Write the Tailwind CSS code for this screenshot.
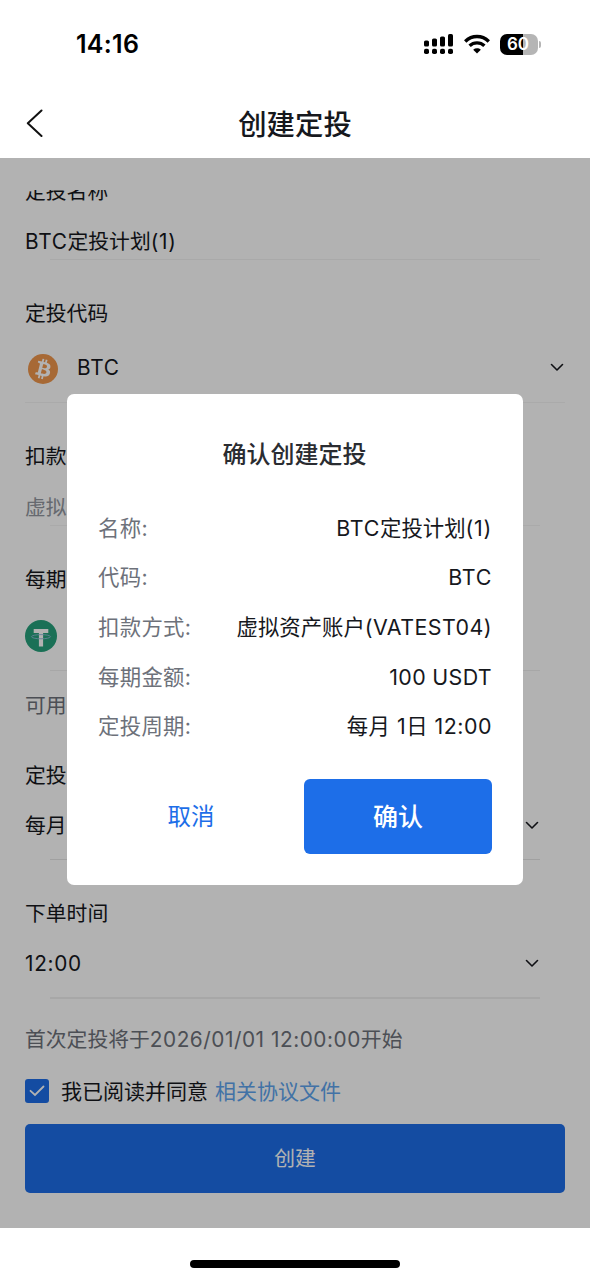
<!DOCTYPE html>
<html lang="zh-CN">
<head>
<meta charset="utf-8">
<meta name="viewport" content="width=590">
<title>创建定投</title>
<script src="https://cdn.jsdelivr.net/npm/@tailwindcss/browser@4"></script>
</head>
<body class="bg-white">
<div class="relative flex h-[1280px] w-[590px] flex-col overflow-hidden bg-white font-['Inter','Noto_Sans_CJK_SC',sans-serif] text-[20.8px] leading-[30px] text-[#16181d]">

  <!-- Status bar -->
  <header class="flex h-[88px] shrink-0 items-center justify-between pr-[49px] pl-[76px]">
    <span class="text-[25px] font-semibold tracking-[0.3px] text-black">14:16</span>
    <div class="flex items-center">
      <svg class="h-[22px] w-[32px]" viewBox="0 0 32 22" fill="#000">
        <rect x="1" y="7.500" width="5" height="6" rx="1.600"/><rect x="9" y="5.500" width="5" height="8" rx="1.600"/><rect x="17" y="3.500" width="5" height="10" rx="1.600"/><rect x="25" y="1" width="5" height="12.500" rx="1.600"/>
        <rect x="1" y="15.800" width="5" height="5.200" rx="1.800"/><rect x="9" y="15.800" width="5" height="5.200" rx="1.800"/><rect x="17" y="15.800" width="5" height="5.200" rx="1.800"/><rect x="25" y="15.800" width="5" height="5.200" rx="1.800"/>
      </svg>
      <svg class="ml-[9px] h-[20px] w-[26px]" viewBox="0 0 26 20" fill="none" stroke="#000" stroke-width="3.4">
        <path d="M1.200 7.400C8 .9 18 .9 24.800 7.400"/><path d="M5.600 11.800C9.800 7.900 16.200 7.900 20.400 11.800"/><path d="M13 19.500 9.200 15.700C11.400 13.900 14.600 13.900 16.800 15.700Z" fill="#000" stroke="none"/>
      </svg>
      <div class="ml-[10px] flex h-[21px] w-[38px] items-center justify-center rounded-[7px] bg-linear-to-r from-black from-60% to-[#b5b5b5] to-60% pr-[2px] text-[17px] font-semibold text-white">60</div>
      <div class="ml-[1px] h-[7px] w-[2px] rounded-r-full bg-[#b5b5b5]"></div>
    </div>
  </header>

  <!-- Title bar -->
  <nav class="grid h-[70px] shrink-0 grid-cols-[60px_1fr_60px] items-center">
    <svg class="ml-[26px] h-[28px] w-[17px]" viewBox="0 0 17 28" fill="none" stroke="#111" stroke-width="2" stroke-linecap="round" stroke-linejoin="round"><path d="M15.500 1.500 1.800 14.200 15.500 27"/></svg>
    <h1 class="pt-[3px] text-center text-[28.4px] font-medium">创建定投</h1>
  </nav>

  <!-- Form under the dimming mask -->
  <main class="relative h-[1070px] shrink-0 pt-[32px]">
    <div class="flex h-[1038px] flex-col overflow-hidden px-[25px]">
      <div class="-mt-[13px] h-[30px] shrink-0">定投名称</div>
      <div class="mt-[15px] flex h-[37px] shrink-0 items-center pt-[2px] whitespace-nowrap"><span class="tracking-[0.7px]">BTC</span>定投计划<span class="tracking-[0.7px]">(1)</span></div>
      <div class="mr-[25px] ml-[25px] h-px shrink-0 bg-[#f2f2f2]"></div>

      <div class="mt-[39px] h-[30px] shrink-0">定投代码</div>
      <div class="mt-[5px] flex h-[68px] shrink-0 items-center">
        <svg class="mt-[2px] ml-[3px] h-[30px] w-[30px]" viewBox="0 0 32 32"><circle cx="16" cy="16" r="16" fill="#ef974d"/><path fill="#fff" transform="translate(16 16) scale(1.1) translate(-16 -16)" d="M23.200 14c.3-2.100-1.300-3.200-3.500-4l.7-2.800-1.700-.4-.7 2.700-1.400-.3.7-2.800-1.700-.4-.7 2.800-1.100-.3-2.400-.6-.4 1.900 1.200.3c.7.2.8.6.8 1l-1.900 7.800c-.1.2-.3.5-.8.4l-1.200-.3-.9 2 3.500.9-.7 2.800 1.700.4.7-2.800 1.400.4-.7 2.800 1.700.4.7-2.900c3 .6 5.200.3 6.100-2.300.8-2.200 0-3.400-1.500-4.200 1.100-.3 1.900-1 2.100-2.500zm-3.900 5.500c-.5 2.200-4.200 1-5.400.7l1-3.900c1.200.3 5 .9 4.400 3.200zm.5-5.500c-.5 2-3.500 1-4.500.7l.9-3.500c1 .3 4.200.7 3.600 2.800z"/></svg>
        <span class="ml-[19px] tracking-[0.7px]">BTC</span>
        <svg class="mr-[1px] mb-[2px] ml-auto h-[9px] w-[14px]" viewBox="0 0 14 9" fill="none" stroke="#16181d" stroke-width="1.6" stroke-linecap="round" stroke-linejoin="round"><path d="M1.500 1.500 7 7 12.500 1.500"/></svg>
      </div>
      <div class="h-px shrink-0 bg-[#f4f4f4]"></div>

      <div class="mt-[39px] h-[30px] shrink-0">扣款</div>
      <div class="mt-[17px] flex h-[36px] shrink-0 items-center pt-[2px] text-[#9297a0]">虚拟</div>
      <div class="mr-[25px] ml-[25px] h-px shrink-0 bg-[#f4f4f4]"></div>

      <div class="mt-[39px] h-[30px] shrink-0">每期</div>
      <div class="mt-[7px] flex h-[68px] shrink-0 items-center">
        <svg class="h-[32px] w-[32px]" viewBox="0 0 32 32"><circle cx="16" cy="16" r="16" fill="#26a17b"/><path fill="#fff" d="M8.700 9h14.600v4h-5.200v13.500h-4.200V13H8.700z"/><ellipse cx="16" cy="16.700" rx="9.500" ry="2.100" fill="none" stroke="#8fb9d8" stroke-width=".9"/></svg>
      </div>
      <div class="mr-[25px] ml-[25px] h-px shrink-0 bg-[#f0f0f0]"></div>

      <div class="mt-[20px] h-[30px] shrink-0 text-[#6d717a]">可用</div>

      <div class="mt-[40px] h-[30px] shrink-0">定投</div>
      <div class="flex h-[68px] shrink-0 items-center">
        <span class="pt-[2px]">每月</span>
        <svg class="mr-[26px] ml-auto h-[9px] w-[14px]" viewBox="0 0 14 9" fill="none" stroke="#16181d" stroke-width="1.6" stroke-linecap="round" stroke-linejoin="round"><path d="M1.500 1.500 7 7 12.500 1.500"/></svg>
      </div>
      <div class="mr-[25px] ml-[25px] h-px shrink-0 bg-[#e6e6e6]"></div>

      <div class="mt-[39px] h-[30px] shrink-0">下单时间</div>
      <div class="flex h-[68px] shrink-0 items-center">
        <span class="pt-[2px] tracking-[0.7px]">12:00</span>
        <svg class="mr-[26px] ml-auto h-[9px] w-[14px]" viewBox="0 0 14 9" fill="none" stroke="#16181d" stroke-width="1.6" stroke-linecap="round" stroke-linejoin="round"><path d="M1.500 1.500 7 7 12.500 1.500"/></svg>
      </div>
      <div class="mr-[25px] ml-[25px] h-[2px] shrink-0 bg-[#efefef]"></div>

      <div class="mt-[26px] h-[30px] shrink-0 whitespace-nowrap text-[#6d717a]">首次定投将于<span class="tracking-[0.53px]">2026/01/01 12:00:00</span>开始</div>
      <div class="mt-[21px] flex h-[30px] shrink-0 items-center whitespace-nowrap">
        <svg class="h-[24px] w-[24px]" viewBox="0 0 24 24"><rect width="24" height="24" rx="3" fill="#1d6ee8"/><path d="M5.500 11.800 10 16 18.500 7.500" fill="none" stroke="#fff" stroke-width="1.800" stroke-linecap="round"/></svg>
        <span class="ml-[12px] pt-[2px] text-[21px]">我已阅读并同意</span>
        <span class="ml-[7px] pt-[2px] text-[21px] text-[#5da4ee]">相关协议文件</span>
      </div>
      <button class="mt-[18px] h-[69px] shrink-0 rounded-[5px] bg-[#1d6ee8] text-white">创建</button>
    </div>
    <div class="absolute inset-0 bg-black/30"></div>
  </main>

  <!-- Home indicator -->
  <footer class="flex h-[52px] shrink-0 justify-center pt-[32px]">
    <div class="h-[8px] w-[210px] rounded-full bg-black"></div>
  </footer>

  <!-- Confirmation dialog -->
  <section class="absolute top-[394px] left-[67px] flex h-[491px] w-[456px] flex-col rounded-[7px] bg-white px-[31px] pt-[46px] text-[21.4px]">
    <h2 class="pr-px text-center text-[24px] font-medium text-[#2a2c31]">确认创建定投</h2>
    <dl class="mt-[33px] grid auto-rows-[49.6px] grid-cols-[auto_1fr] items-center whitespace-nowrap">
      <dt class="tracking-[0.3px] text-[#6d717a]">名称:</dt><dd class="text-right"><span class="tracking-[0.7px]">BTC</span>定投计划<span class="tracking-[0.7px]">(1)</span></dd>
      <dt class="tracking-[0.3px] text-[#6d717a]">代码:</dt><dd class="text-right tracking-[0.7px]">BTC</dd>
      <dt class="tracking-[0.3px] text-[#6d717a]">扣款方式:</dt><dd class="text-right">虚拟资产账户<span class="tracking-[0.45px]">(VATEST04)</span></dd>
      <dt class="tracking-[0.3px] text-[#6d717a]">每期金额:</dt><dd class="text-right tracking-[0.35px]">100 USDT</dd>
      <dt class="tracking-[0.3px] text-[#6d717a]">定投周期:</dt><dd class="text-right tracking-[0.5px]">每月 1日 12:00</dd>
    </dl>
    <div class="mt-[28px] grid h-[75px] grid-cols-[1fr_188px] gap-[20px]">
      <button class="pt-[2px] text-[23.5px] text-[#1d6ee8]">取消</button>
      <button class="rounded-[6px] bg-[#1d6ee8] pt-[2px] text-[25px] font-medium text-white">确认</button>
    </div>
  </section>
</div>
</body>
</html>
